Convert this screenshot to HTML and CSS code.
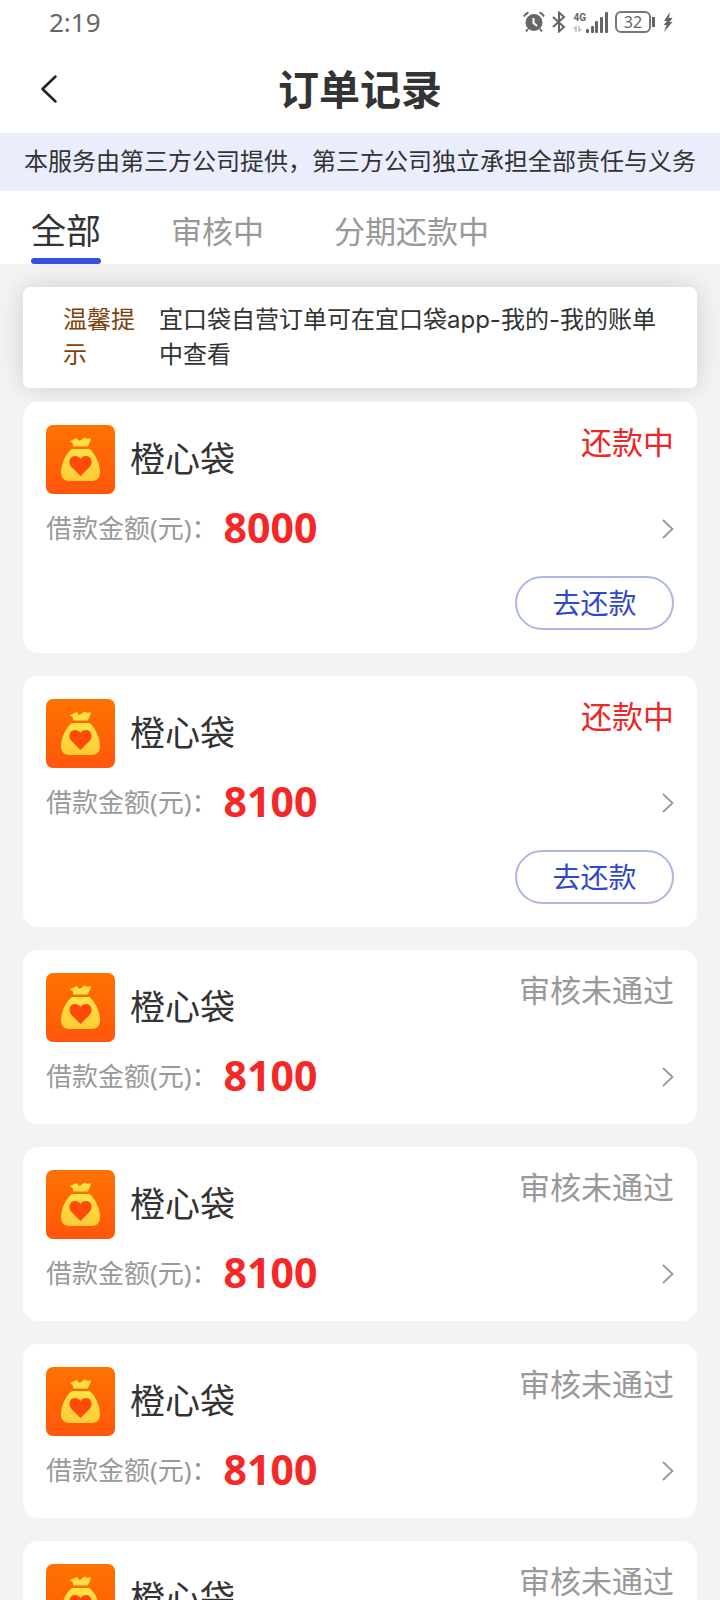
FILE: index.html
```html
<!DOCTYPE html>
<html lang="zh-CN">
<head>
  <meta charset="UTF-8" />
  <meta name="viewport" content="width=device-width, initial-scale=1.0"/>
  <title>订单记录</title>
  <link rel="stylesheet" href="styles.css">
</head>
<body>

  <!-- shared icons -->
  <svg class="sprite" aria-hidden="true">
    <defs>
      <linearGradient id="orange" x1="0" y1="0" x2="0" y2="1">
        <stop offset="0" stop-color="#ff7300"/>
        <stop offset="1" stop-color="#ff560c"/>
      </linearGradient>
      <linearGradient id="gold" x1="0" y1="0" x2="0" y2="1">
        <stop offset="0" stop-color="#ffe345"/>
        <stop offset="1" stop-color="#ffcb35"/>
      </linearGradient>
    </defs>
    <symbol id="bag" viewBox="0 0 69 69">
      <rect width="69" height="69" rx="7" fill="url(#orange)"/>
      <path d="M24 16.500C26 14.500 28.500 14 31 13C32 15 33 16 34.500 15.500C36 15 37 12.500 39 12.500C40 14 42.500 14 44.500 13C45.500 16 43 18 42 21.500H27C27.500 19 26.500 17 24 16.500Z" fill="#ffdf40"/>
      <path d="M26 24H43.500C49 28 54 39 54 47C54 53 51 56 45 56H24C18 56 15 53 15 47C15 39 20 28 26 24Z" fill="url(#gold)"/>
      <path d="M34.500 51L25.500 42C22 38 23 31.500 28.500 31C31.500 31 33.500 32 34.500 34C35.500 32 37.500 31 40.500 31C46 31.500 47 38 43.500 42Z" fill="#ff4a08"/>
    </symbol>
    <symbol id="arrow" viewBox="0 0 12 20">
      <path d="M1 1L10.500 10L1 19" fill="none" stroke="#999" stroke-width="1.800"/>
    </symbol>
  </svg>

  <header class="header">
    <div class="status-bar">
      <span class="time">2:19</span>
      <div class="status-icons">
        <svg width="22" height="22" viewBox="0 0 22 22" fill="none" stroke="#666" stroke-width="2">
          <circle cx="11" cy="11.500" r="8.500" fill="#666" stroke="none"/>
          <path d="M1 5.500Q2.500 2.500 5.500 1.500M16.500 1.500Q19.500 2.500 21 5.500M5 18L3 20.500M17 18L19 20.500"/>
          <path d="M10.500 7V12L14 15" stroke="#fff"/>
        </svg>
        <svg width="14" height="22" viewBox="0 0 14 22" fill="none" stroke="#666" stroke-width="2">
          <path d="M1 6L12 16L7 20.500V1.500L12 6L1 16"/>
        </svg>
        <div class="signal">
          <div class="network">
            <span>4G</span>
            <svg width="9" height="6" viewBox="0 0 9 6" fill="none" stroke="#bbb" stroke-width="1.500">
              <path d="M3 6V1L0.500 3M6 0V5L8.500 3"/>
            </svg>
          </div>
          <svg width="22" height="21" viewBox="0 0 22 21" fill="#666">
            <rect x="0" y="17" width="3" height="4" rx="1"/>
            <rect x="5" y="14" width="3" height="7" rx="1"/>
            <rect x="9" y="9" width="3" height="12" rx="1"/>
            <rect x="14" y="5" width="3" height="16" rx="1"/>
            <rect x="19" y="0" width="3" height="21" rx="1"/>
          </svg>
        </div>
        <div class="battery">32</div>
        <svg class="bolt" width="10" height="20" viewBox="0 0 10 20" fill="#666">
          <path d="M7 0L1 9H4L0.500 13H3.500L1 20L9.500 10H6.500L9.500 6H6Z"/>
        </svg>
      </div>
    </div>
    <div class="nav">
      <button class="back" aria-label="返回">
        <svg width="17" height="28" viewBox="0 0 17 28" fill="none" stroke="#222" stroke-width="2.500" stroke-linecap="round" stroke-linejoin="round">
          <path d="M14.500 1.500L1.500 14L14.500 26.500"/>
        </svg>
      </button>
      <h1>订单记录</h1>
    </div>
  </header>

  <p class="notice">本服务由第三方公司提供，第三方公司独立承担全部责任与义务</p>

  <nav class="tabs">
    <button class="tab active">全部</button>
    <button class="tab">审核中</button>
    <button class="tab">分期还款中</button>
  </nav>

  <main class="content">
    <div class="tip">
      <span class="tip-label">温馨提示</span>
      <span class="tip-text">宜口袋自营订单可在宜口袋app-我的-我的账单中查看</span>
    </div>

    <div class="orders">
      <section class="card">
        <div class="card-top">
          <svg class="logo"><use href="#bag"/></svg>
          <h2>橙心袋</h2>
          <span class="state repaying">还款中</span>
        </div>
        <div class="amount-row">
          <span class="label">借款金额(元)：</span>
          <span class="amount">8000</span>
          <svg class="arrow"><use href="#arrow"/></svg>
        </div>
        <button class="repay">去还款</button>
      </section>

      <section class="card">
        <div class="card-top">
          <svg class="logo"><use href="#bag"/></svg>
          <h2>橙心袋</h2>
          <span class="state repaying">还款中</span>
        </div>
        <div class="amount-row">
          <span class="label">借款金额(元)：</span>
          <span class="amount">8100</span>
          <svg class="arrow"><use href="#arrow"/></svg>
        </div>
        <button class="repay">去还款</button>
      </section>

      <section class="card">
        <div class="card-top">
          <svg class="logo"><use href="#bag"/></svg>
          <h2>橙心袋</h2>
          <span class="state">审核未通过</span>
        </div>
        <div class="amount-row">
          <span class="label">借款金额(元)：</span>
          <span class="amount">8100</span>
          <svg class="arrow"><use href="#arrow"/></svg>
        </div>
      </section>

      <section class="card">
        <div class="card-top">
          <svg class="logo"><use href="#bag"/></svg>
          <h2>橙心袋</h2>
          <span class="state">审核未通过</span>
        </div>
        <div class="amount-row">
          <span class="label">借款金额(元)：</span>
          <span class="amount">8100</span>
          <svg class="arrow"><use href="#arrow"/></svg>
        </div>
      </section>

      <section class="card">
        <div class="card-top">
          <svg class="logo"><use href="#bag"/></svg>
          <h2>橙心袋</h2>
          <span class="state">审核未通过</span>
        </div>
        <div class="amount-row">
          <span class="label">借款金额(元)：</span>
          <span class="amount">8100</span>
          <svg class="arrow"><use href="#arrow"/></svg>
        </div>
      </section>

      <section class="card">
        <div class="card-top">
          <svg class="logo"><use href="#bag"/></svg>
          <h2>橙心袋</h2>
          <span class="state">审核未通过</span>
        </div>
        <div class="amount-row">
          <span class="label">借款金额(元)：</span>
          <span class="amount">8100</span>
          <svg class="arrow"><use href="#arrow"/></svg>
        </div>
      </section>
    </div>
  </main>

</body>
</html>
```

FILE: styles.css
```css
* {
  box-sizing: border-box;
}

body {
  margin: 0;
  height: 100vh;
  display: flex;
  flex-direction: column;
  font-family: "Noto Sans", "Noto Sans CJK SC", sans-serif;
  color: #333;
  background: #f3f3f3;
}

h1, h2, p {
  margin: 0;
}

button {
  font-family: inherit;
  padding: 0;
  border: none;
  background: none;
  cursor: pointer;
}

svg {
  display: block;
  flex-shrink: 0;
}

.sprite {
  position: absolute;
  width: 0;
  height: 0;
}

/* header */
.header {
  background: #fff;
}

.status-bar {
  display: flex;
  justify-content: space-between;
  align-items: center;
  height: 44px;
  padding: 0 47px 0 49px;
  color: #666;
}

.time {
  font-size: 26px;
  line-height: 44px;
}

.status-icons {
  display: flex;
  align-items: center;
  gap: 7px;
}

.signal {
  display: flex;
}

.network {
  display: flex;
  flex-direction: column;
  gap: 3px;
  font-family: Roboto, sans-serif;
  font-size: 10px;
  font-weight: 700;
  line-height: 11px;
}

.battery {
  position: relative;
  width: 36px;
  height: 22px;
  border: 2px solid #777;
  border-radius: 6px;
  font-size: 16px;
  line-height: 18px;
  text-align: center;
}

.battery::after {
  content: "";
  position: absolute;
  top: 4px;
  right: -6px;
  width: 3px;
  height: 10px;
  background: #666;
}

.bolt {
  margin-left: 5px;
}

.nav {
  display: grid;
  grid-template-columns: 1fr auto 1fr;
  align-items: center;
  height: 89px;
  padding: 0 41px;
}

.back {
  justify-self: start;
}

h1 {
  font-size: 41px;
  font-weight: 700;
  line-height: 60px;
}

.notice {
  padding: 10px 0 12px;
  background: #e9edfc;
  font-size: 24px;
  line-height: 36px;
  text-align: center;
}

/* tabs */
.tabs {
  display: flex;
  gap: 70px;
  height: 73px;
  padding: 0 31px;
  background: #fff;
}

.tab {
  padding-top: 12px;
  border-bottom: 6px solid transparent;
  font-size: 31px;
  line-height: 48px;
  color: #999;
}

.tab.active {
  position: relative;
  font-size: 35px;
  color: #333;
}

.tab.active::after {
  content: "";
  position: absolute;
  left: 0;
  right: 0;
  bottom: -6px;
  height: 6px;
  border-radius: 3px;
  background: #3850dc;
}

/* list */
.content {
  flex: 1;
  min-height: 0;
  padding: 23px;
  overflow-y: auto;
  scrollbar-width: none;
}

.tip {
  display: flex;
  gap: 24px;
  margin-bottom: 14px;
  padding: 15px 24px 16px 40px;
  border-radius: 7px;
  background: #fff;
  box-shadow: 0 0 24px rgba(0, 0, 0, 0.15);
  font-family: Inter, "Noto Sans CJK SC", sans-serif;
  font-size: 24px;
  line-height: 35px;
}

.tip-label {
  flex: 0 0 72px;
  color: #7d420c;
}

.orders {
  position: relative;
  display: flex;
  flex-direction: column;
  gap: 23px;
}

.card {
  display: flex;
  flex-direction: column;
  padding: 23px;
  border-radius: 15px;
  background: #fff;
}

.card-top {
  display: flex;
  align-items: center;
  gap: 15px;
}

.logo {
  width: 69px;
  height: 69px;
}

h2 {
  flex: 1;
  padding-bottom: 2px;
  font-size: 35px;
  font-weight: 400;
  line-height: 52px;
}

.state {
  align-self: flex-start;
  font-size: 31px;
  line-height: 34px;
  color: #999;
}

.state.repaying {
  color: #ee2626;
}

.amount-row {
  display: flex;
  align-items: center;
  height: 49px;
  margin-top: 10px;
}

.label {
  padding-bottom: 2px;
  font-size: 26px;
  line-height: 40px;
  color: #999;
}

.amount {
  flex: 1;
  margin-left: 6px;
  padding-bottom: 4px;
  font-size: 41px;
  font-weight: 700;
  line-height: 48px;
  color: #f52727;
}

.arrow {
  width: 12px;
  height: 20px;
}

.repay {
  align-self: flex-end;
  width: 159px;
  height: 54px;
  margin-top: 23px;
  border: 2px solid #adb6e8;
  border-radius: 27px;
  font-size: 28px;
  line-height: 50px;
  color: #3048cc;
}
```
